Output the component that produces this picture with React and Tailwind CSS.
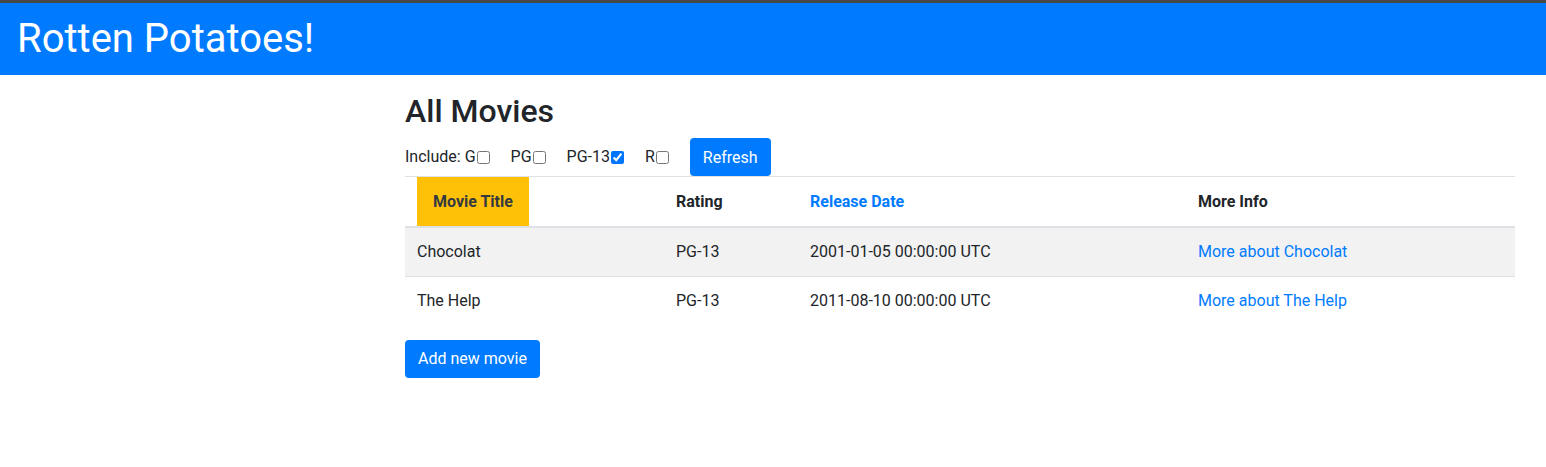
import React from 'react';

const movies = [
  { title: 'Chocolat', rating: 'PG-13', date: '2001-01-05 00:00:00 UTC' },
  { title: 'The Help', rating: 'PG-13', date: '2011-08-10 00:00:00 UTC' },
];

const ratings = [
  { name: 'G', checked: false },
  { name: 'PG', checked: false },
  { name: 'PG-13', checked: true },
  { name: 'R', checked: false },
];

export default function App() {
  return (
    <div className="min-h-[467px] bg-white font-['Roboto',sans-serif] text-[#212529]">
      <div className="h-[3px] bg-[#484848]" />
      <header className="h-[72px] bg-[#007bff] px-[17px] pt-[12px]">
        <h1 className="text-[40px] leading-[48px] text-white font-normal">Rotten Potatoes!</h1>
      </header>

      <main className="pl-[405px] pt-[17px]">
        <div className="w-[1110px]">
          <h2 className="text-[32px] font-medium leading-[38px] mb-[8px]">All Movies</h2>

          <form className="flex items-center h-[38px] text-[16px]">
            <span className="mr-[4px]">Include:</span>
            {ratings.map((r) => (
              <label key={r.name} className="flex items-center mr-[21px]">
                <span>{r.name}</span>
                <input
                  type="checkbox"
                  defaultChecked={r.checked}
                  className="w-[13px] h-[13px] ml-[1px] mt-[1px] accent-[#0075ff]"
                />
              </label>
            ))}
            <button
              type="button"
              className="h-[38px] px-[13px] pt-[1px] rounded-[4px] bg-[#007bff] text-white text-[16px]"
            >
              Refresh
            </button>
          </form>

          <table className="w-full border-collapse text-[16px]">
            <colgroup>
              <col className="w-[259px]" />
              <col className="w-[134px]" />
              <col className="w-[388px]" />
              <col />
            </colgroup>
            <thead>
              <tr className="border-t border-[#dee2e6]">
                <th className="pl-[12px] p-0 text-left font-bold border-b-2 border-[#dee2e6]">
                  <div className="inline-block h-[49px] leading-[49px] px-[16px] bg-[#ffc107] text-[#343a40] align-top">Movie Title</div>
                </th>
                <th className="px-[12px] text-left font-bold border-b-2 border-[#dee2e6]">Rating</th>
                <th className="px-[12px] text-left font-bold text-[#007bff] border-b-2 border-[#dee2e6]">Release Date</th>
                <th className="px-[12px] text-left font-bold border-b-2 border-[#dee2e6]">More Info</th>
              </tr>
            </thead>
            <tbody>
              {movies.map((m, i) => (
                <tr key={m.title} className={`${i > 0 ? 'border-t border-[#dee2e6]' : ''} ${i % 2 === 0 ? 'bg-[#f2f2f2]' : ''}`}>
                  <td className="px-[12px] py-[12px] leading-[24px]">{m.title}</td>
                  <td className="px-[12px] py-[12px] leading-[24px]">{m.rating}</td>
                  <td className="px-[12px] py-[12px] leading-[24px]">{m.date}</td>
                  <td className="px-[12px] py-[12px] leading-[24px]">
                    <a href="#" className="text-[#007bff]">More about {m.title}</a>
                  </td>
                </tr>
              ))}
            </tbody>
          </table>

          <button
            type="button"
            className="mt-[15px] h-[38px] px-[13px] rounded-[4px] bg-[#007bff] text-white text-[16px]"
          >
            Add new movie
          </button>
        </div>
      </main>
    </div>
  );
}
